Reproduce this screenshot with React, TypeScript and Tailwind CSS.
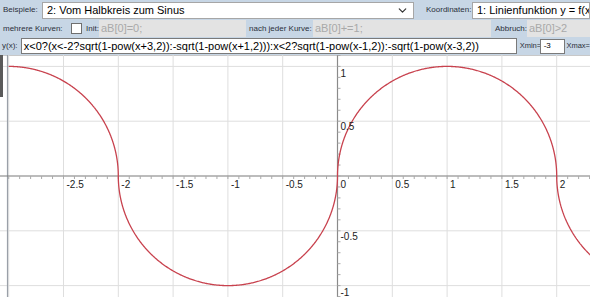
import { ChevronDown } from 'lucide-react';

const SCALE = 109.6;
const X0 = 337.5;
const Y0 = 121;

const px = (x: number) => X0 + SCALE * x;
const py = (y: number) => Y0 - SCALE * y;

function f(x: number) {
  if (x < 0) {
    return x < -2 ? Math.sqrt(1 - Math.pow(x + 3, 2)) : -Math.sqrt(1 - Math.pow(x + 1, 2));
  }
  return x < 2 ? Math.sqrt(1 - Math.pow(x - 1, 2)) : -Math.sqrt(1 - Math.pow(x - 3, 2));
}

function curvePath() {
  const segs: [number, number][] = [
    [-3, -2],
    [-2, 0],
    [0, 2],
    [2, 2.5],
  ];
  let d = '';
  for (const [a, b] of segs) {
    const n = 400;
    for (let i = 0; i <= n; i++) {
      // denser sampling near the ends where the circle is vertical
      const t = (1 - Math.cos((Math.PI * i) / n)) / 2;
      const x = a + (b - a) * t;
      const xx = i === n ? b - 1e-9 : i === 0 ? a + 1e-9 : x;
      const y = f(xx);
      d += `${i === 0 ? 'M' : 'L'}${px(xx).toFixed(2)},${py(y).toFixed(2)} `;
    }
  }
  return d;
}

const xGrid = [-3, -2.5, -2, -1.5, -1, -0.5, 0.5, 1, 1.5, 2, 2.5];
const xLabels = ['-2.5', '-2', '-1.5', '-1', '-0.5', '0', '0.5', '1', '1.5', '2'];
const yGrid = [1, 0.5, -0.5, -1];
const yLabels: [string, number][] = [
  ['1', 22],
  ['0.5', 75],
  ['-0.5', 185],
  ['-1', 241],
];

function Graph() {
  const minor: number[] = [];
  for (let i = -30; i <= 25; i++) minor.push(i / 10);
  const minorY: number[] = [];
  for (let i = -11; i <= 11; i++) minorY.push(i / 10);
  return (
    <svg width={590} height={242} className="block bg-white">
      <line x1={0} y1={0.5} x2={590} y2={0.5} stroke="#c8c8c8" />
      {xGrid.map(g => (
        <line key={g} x1={px(g)} y1={0} x2={px(g)} y2={242} stroke="#dedede" strokeWidth={1} />
      ))}
      {yGrid.map(g => (
        <line key={g} x1={0} y1={py(g)} x2={590} y2={py(g)} stroke="#dedede" strokeWidth={1} />
      ))}
      {/* left border and scroll thumb */}
      <line x1={7.5} y1={0} x2={7.5} y2={242} stroke="#9aa0a8" strokeWidth={1.2} />
      <rect x={0} y={0} width={3} height={42} fill="#5a5a5a" />
      {/* axes */}
      <line x1={0} y1={Y0} x2={590} y2={Y0} stroke="#7a7a7a" strokeWidth={1.2} />
      <line x1={X0} y1={0} x2={X0} y2={242} stroke="#8a8a8a" strokeWidth={1.2} />
      {minor.map(m => (
        <line key={`mx${m}`} x1={px(m)} y1={Y0} x2={px(m)} y2={Y0 + 3} stroke="#aaaaaa" />
      ))}
      {minorY.map(m => (
        <line key={`my${m}`} x1={X0} y1={py(m)} x2={X0 + 3} y2={py(m)} stroke="#aaaaaa" />
      ))}
      <path d={curvePath()} fill="none" stroke="#c8424e" strokeWidth={1.3} />
      <g fontFamily="'Liberation Sans', Arial, sans-serif" fontSize={10} fill="#222">
        {xLabels.map(l => (
          <text key={l} x={px(parseFloat(l)) + 3} y={133}>
            {l}
          </text>
        ))}
        {yLabels.map(([l, y]) => (
          <text key={l} x={X0 + 3} y={y}>
            {l}
          </text>
        ))}
      </g>
    </svg>
  );
}

export default function App() {
  return (
    <div
      className="w-[590px] h-[297px] overflow-hidden bg-[#c7d6e5] text-[#2b2f3a]"
      style={{ fontFamily: "'Liberation Sans', Arial, sans-serif" }}
    >
      <div className="h-[55px] flex flex-col">
        {/* Row 1 */}
        <div className="h-[20px] flex items-center whitespace-nowrap">
          <span className="w-[42px] pl-[3px] text-[8px]">Beispiele:</span>
          <div className="w-[372px] h-[17px] bg-white border border-[#a6a6a6] flex items-center pl-[4px] pr-[4px] text-[11px] text-black">
            <span>2: Vom Halbkreis zum Sinus</span>
            <ChevronDown className="ml-auto" size={13} strokeWidth={2.2} color="#333" />
          </div>
          <span className="w-[58px] pl-[12px] text-[8px]">Koordinaten:</span>
          <div className="flex-1 h-[17px] bg-white border border-[#a6a6a6] flex items-center pl-[4px] text-[11px] text-black overflow-hidden">
            <span>1: Linienfunktion y = f(x)</span>
          </div>
        </div>
        {/* Row 2 */}
        <div className="h-[17px] flex items-center whitespace-nowrap">
          <span className="w-[71px] pl-[3px] text-[8px]">mehrere Kurven:</span>
          <div className="w-[11px] h-[11px] bg-white border border-[#6f6f6f]" />
          <span className="w-[17px] pl-[4px] text-[8px]">Init:</span>
          <div className="w-[147px] h-[17px] bg-[#e3e3e3] flex items-center pl-[2px] text-[11px] text-[#a9a9a9]">
            aB[0]=0;
          </div>
          <span className="w-[67px] pl-[3px] text-[8px]">nach jeder Kurve:</span>
          <div className="w-[178px] h-[17px] bg-[#e3e3e3] flex items-center pl-[2px] text-[11px] text-[#a9a9a9]">
            aB[0]+=1;
          </div>
          <span className="w-[36px] pl-[4px] text-[8px]">Abbruch:</span>
          <div className="flex-1 h-[17px] bg-[#e3e3e3] flex items-center pl-[2px] text-[11px] text-[#a9a9a9]">
            aB[0]&gt;2
          </div>
        </div>
        {/* Row 3 */}
        <div className="h-[18px] flex items-center whitespace-nowrap">
          <span className="w-[21px] pl-[2px] text-[8px]">y(x):</span>
          <div className="w-[502px] h-[16px] bg-white border border-[#7a7a7a] flex items-center pl-[2px] text-[11px] text-black overflow-hidden">
            x&lt;0?(x&lt;-2?sqrt(1-pow(x+3,2)):-sqrt(1-pow(x+1,2))):x&lt;2?sqrt(1-pow(x-1,2)):-sqrt(1-pow(x-3,2))
          </div>
          <span className="w-[23px] pl-[3px] text-[7.5px]">Xmin=</span>
          <div className="w-[26px] h-[15px] bg-white border border-[#7a7a7a] flex items-center pl-[3px] text-[8px] text-black">
            -3
          </div>
          <span className="pl-[1px] text-[7.5px]">Xmax=</span>
        </div>
      </div>
      <Graph />
    </div>
  );
}
